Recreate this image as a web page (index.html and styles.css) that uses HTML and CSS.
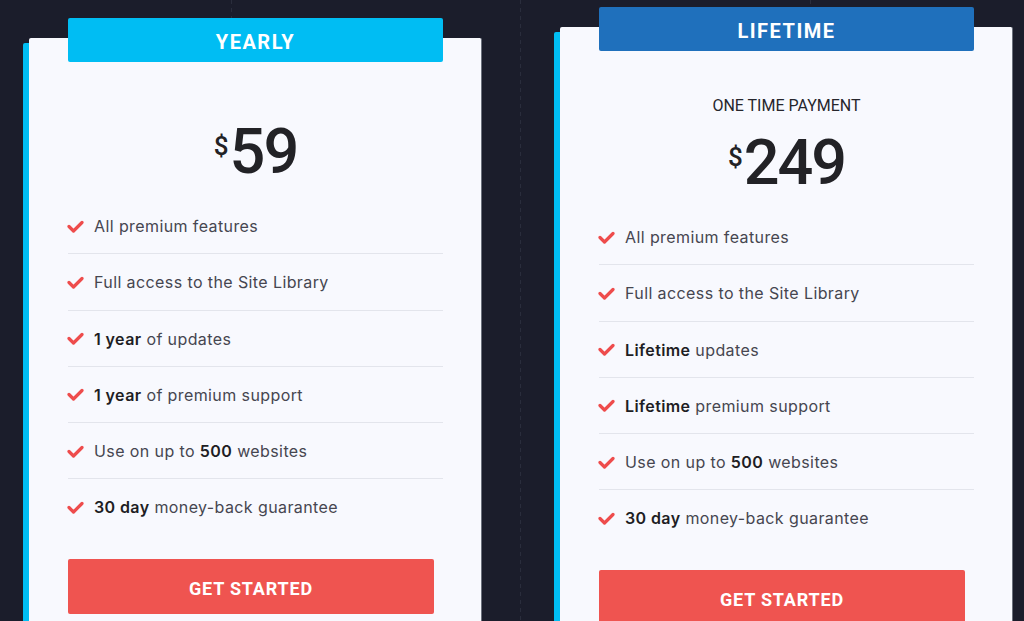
FILE: index.html
```html
<!DOCTYPE html>
<html lang="en">
<head>
<meta charset="utf-8">
<title>Pricing</title>
<link rel="stylesheet" href="styles.css">
</head>
<body>
<main class="pricing">
  <section class="card card--yearly">
    <div class="tab tab--yearly">YEARLY</div>
    <div class="price price--yearly"><span class="currency">$</span><span class="amount">59</span></div>
    <ul class="features">
      <li><svg class="check" viewBox="0 0 17 13" width="17" height="13"><polyline points="2,6.5 6.5,11 15,2.5" /></svg><span>All premium features</span></li>
      <li><svg class="check" viewBox="0 0 17 13" width="17" height="13"><polyline points="2,6.5 6.5,11 15,2.5" /></svg><span>Full access to the Site Library</span></li>
      <li><svg class="check" viewBox="0 0 17 13" width="17" height="13"><polyline points="2,6.5 6.5,11 15,2.5" /></svg><span><b>1 year</b> of updates</span></li>
      <li><svg class="check" viewBox="0 0 17 13" width="17" height="13"><polyline points="2,6.5 6.5,11 15,2.5" /></svg><span><b>1 year</b> of premium support</span></li>
      <li><svg class="check" viewBox="0 0 17 13" width="17" height="13"><polyline points="2,6.5 6.5,11 15,2.5" /></svg><span>Use on up to <b>500</b> websites</span></li>
      <li><svg class="check" viewBox="0 0 17 13" width="17" height="13"><polyline points="2,6.5 6.5,11 15,2.5" /></svg><span><b>30 day</b> money-back guarantee</span></li>
    </ul>
    <button class="cta">GET STARTED</button>
  </section>
  <section class="card card--lifetime">
    <div class="tab tab--lifetime">LIFETIME</div>
    <div class="subtitle">ONE TIME PAYMENT</div>
    <div class="price price--lifetime"><span class="currency">$</span><span class="amount">249</span></div>
    <ul class="features">
      <li><svg class="check" viewBox="0 0 17 13" width="17" height="13"><polyline points="2,6.5 6.5,11 15,2.5" /></svg><span>All premium features</span></li>
      <li><svg class="check" viewBox="0 0 17 13" width="17" height="13"><polyline points="2,6.5 6.5,11 15,2.5" /></svg><span>Full access to the Site Library</span></li>
      <li><svg class="check" viewBox="0 0 17 13" width="17" height="13"><polyline points="2,6.5 6.5,11 15,2.5" /></svg><span><b>Lifetime</b> updates</span></li>
      <li><svg class="check" viewBox="0 0 17 13" width="17" height="13"><polyline points="2,6.5 6.5,11 15,2.5" /></svg><span><b>Lifetime</b> premium support</span></li>
      <li><svg class="check" viewBox="0 0 17 13" width="17" height="13"><polyline points="2,6.5 6.5,11 15,2.5" /></svg><span>Use on up to <b>500</b> websites</span></li>
      <li><svg class="check" viewBox="0 0 17 13" width="17" height="13"><polyline points="2,6.5 6.5,11 15,2.5" /></svg><span><b>30 day</b> money-back guarantee</span></li>
    </ul>
    <button class="cta">GET STARTED</button>
  </section>
</main>
</body>
</html>
```

FILE: styles.css
```css
html, body {
  margin: 0;
  padding: 0;
  height: 621px;
  overflow: hidden;
}

body {
  background-color: #1b1d2b;
  background-image:
    linear-gradient(#2a2d3c 50%, transparent 50%),
    linear-gradient(#2a2d3c 50%, transparent 50%),
    linear-gradient(#2a2d3c 50%, transparent 50%);
  background-size: 1px 8px;
  background-position: 231px 0, 520px 0, 810px 0;
  background-repeat: repeat-y;
  font-family: "Inter", "Noto Sans", sans-serif;
}

.pricing {
  display: flex;
  align-items: flex-start;
  gap: 78px;
  padding-left: 29px;
}

.card {
  box-sizing: border-box;
  width: 453px;
  padding: 0 38px 40px 39px;
  background: #f8f9fe;
  border-right: 1px solid #6b707c;
  border-radius: 2px 2px 0 0;
  box-shadow: -6px 5px 0 #00bef3;
}

.card--yearly {
  margin-top: 38px;
}

.card--lifetime {
  margin-top: 27px;
}

.tab {
  box-sizing: border-box;
  margin-top: -20px;
  height: 44px;
  padding-top: 3px;
  display: flex;
  align-items: center;
  justify-content: center;
  border-radius: 2px;
  color: #ffffff;
  font-family: "Roboto", "Liberation Sans", sans-serif;
  font-weight: 700;
  font-size: 20px;
  letter-spacing: 1.5px;
}

.tab--yearly {
  background: #00bdf3;
}

.tab--lifetime {
  background: #1f70bc;
}

.subtitle {
  margin-top: 45px;
  text-align: center;
  font-family: "Roboto", "Liberation Sans", sans-serif;
  font-size: 16px;
  line-height: 20px;
  color: #26262c;
}

.price {
  display: flex;
  justify-content: center;
  align-items: flex-start;
  color: #222226;
  font-family: "Roboto", "Liberation Sans", sans-serif;
  font-weight: 500;
  line-height: 1;
}

.price--yearly {
  margin-top: 58px;
}

.price--lifetime {
  margin-top: 15px;
}

.currency {
  font-size: 26px;
  margin-top: 13px;
  margin-right: 1px;
}

.amount {
  font-size: 63px;
  letter-spacing: -2px;
}

.features {
  list-style: none;
  margin: 15px 0 0;
  padding: 0;
}

.features li {
  display: flex;
  align-items: center;
  padding: 16px 0 15.25px;
  border-bottom: 1px solid #e3e5ec;
  font-size: 16px;
  line-height: 24px;
  letter-spacing: 0.4px;
  color: #464650;
}

.features li:last-child {
  border-bottom: none;
}

.features b {
  font-weight: 600;
  color: #1e1e24;
}

.check {
  flex: none;
  margin-left: -1px;
  margin-right: 10px;
  fill: none;
  stroke: #ee4c4c;
  stroke-width: 3.2;
  stroke-linecap: round;
  stroke-linejoin: round;
}

.cta {
  display: block;
  box-sizing: border-box;
  margin-top: 24px;
  width: 366px;
  height: 55px;
  padding: 4px 0 0;
  border: none;
  border-radius: 2px;
  background: #ef5450;
  color: #ffffff;
  font-family: "Roboto", "Liberation Sans", sans-serif;
  font-weight: 700;
  font-size: 18px;
  letter-spacing: 0.8px;
  cursor: pointer;
}
```
